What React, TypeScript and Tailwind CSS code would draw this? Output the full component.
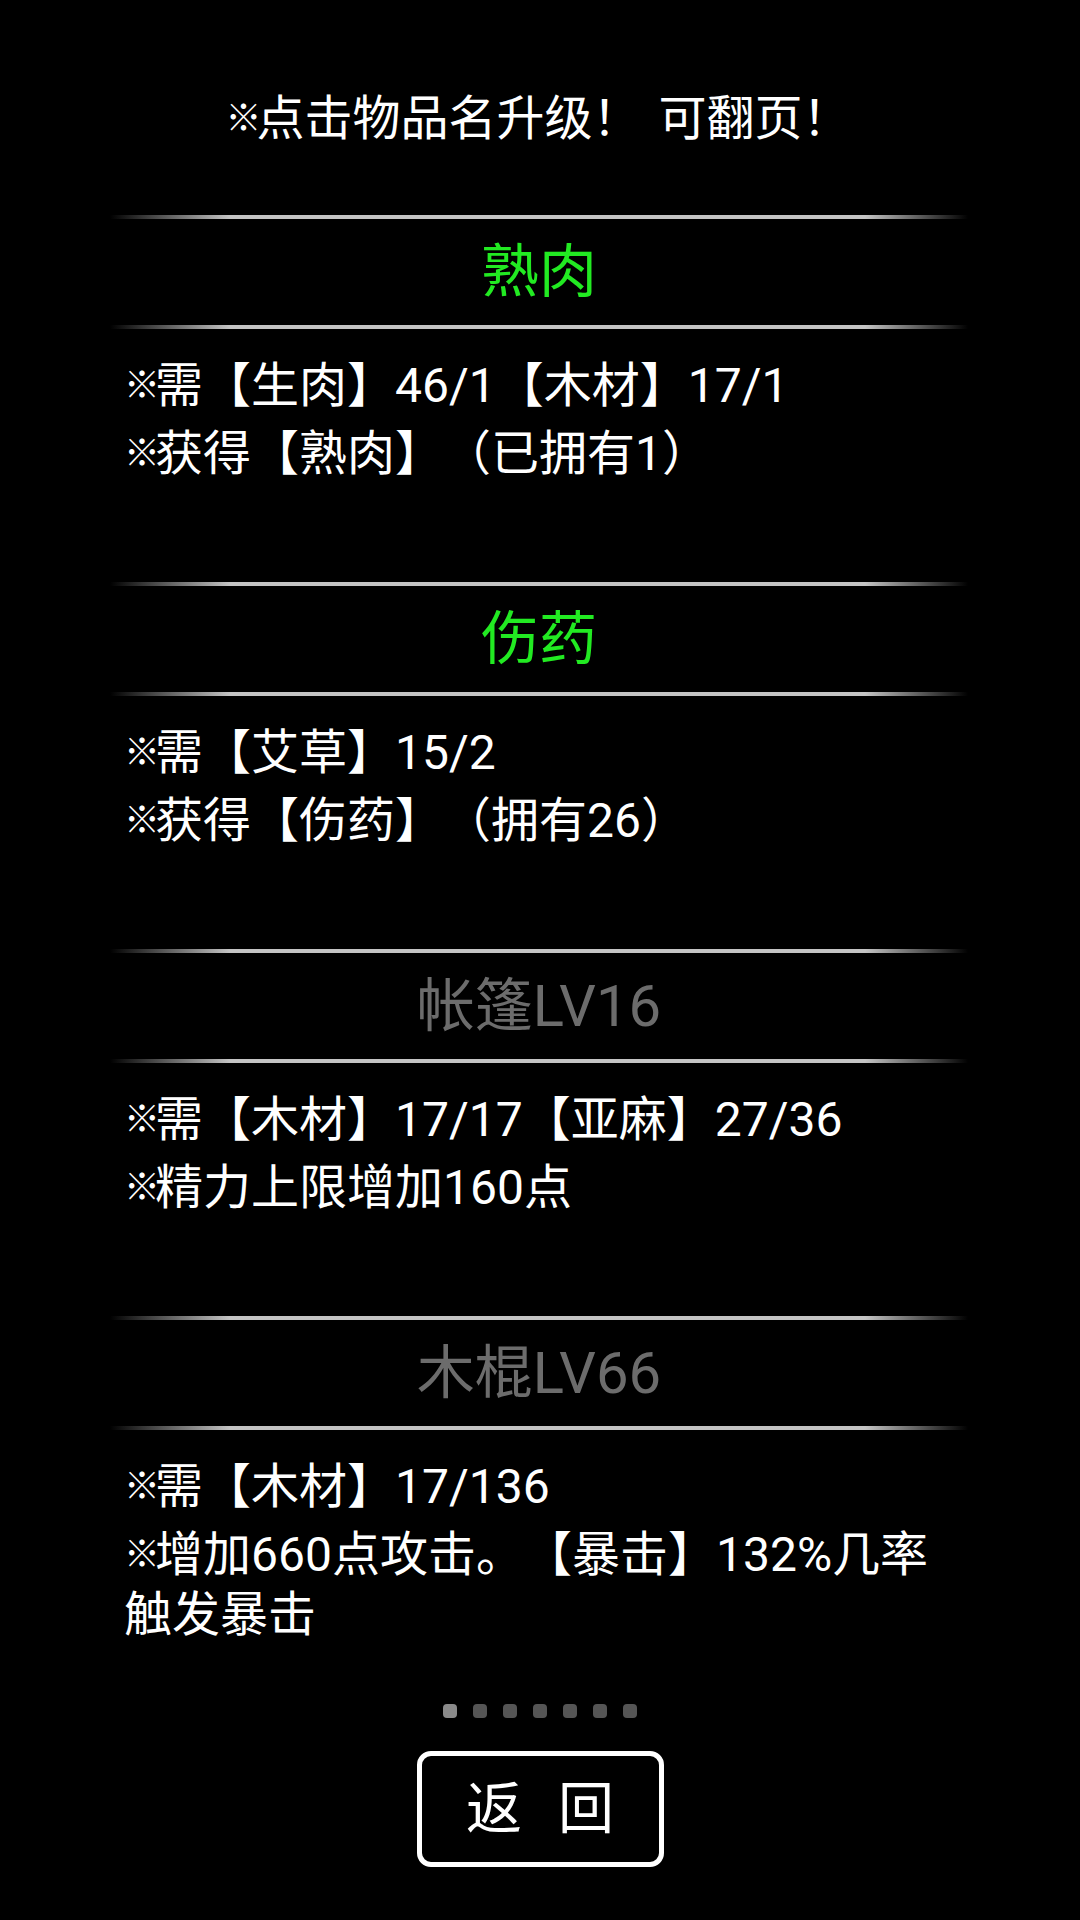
import React from 'react';

type Item = {
  name: string;
  active: boolean;
  lines: string[][];
};

const items: Item[] = [
  {
    name: '熟肉',
    active: true,
    lines: [['需【生肉】46/1【木材】17/1'], ['获得【熟肉】（已拥有1）']],
  },
  {
    name: '伤药',
    active: true,
    lines: [['需【艾草】15/2'], ['获得【伤药】（拥有26）']],
  },
  {
    name: '帐篷LV16',
    active: false,
    lines: [['需【木材】17/17【亚麻】27/36'], ['精力上限增加160点']],
  },
  {
    name: '木棍LV66',
    active: false,
    lines: [['需【木材】17/136'], ['增加660点攻击。【暴击】132%几率', '触发暴击']],
  },
];

// small reference mark, the game font draws it narrower than a full-width glyph
const Mark: React.FC = () => (
  <span className="align-[4px] text-[36px] font-bold tracking-[-5px]">※</span>
);

const Divider: React.FC = () => (
  <div className="h-[4px] w-full bg-[linear-gradient(to_right,transparent,#c4c4c4_14%,#c4c4c4_88%,transparent)]" />
);

const App: React.FC = () => {
  return (
    <div className="h-[1920px] w-[1080px] bg-black font-['Roboto','Noto_Sans_CJK_SC',sans-serif] text-white [text-spacing-trim:space-all]">
      <div className="ml-[110px] w-[858px]">
        <div className="h-[215px] pt-[91px]">
          <p className="pr-[2px] text-center text-[48px] leading-[56px] whitespace-nowrap">
            <Mark />
            点击物品名升级<span className="mr-[18px]">！</span>可翻页！
          </p>
        </div>

        {items.map((item) => (
          <div key={item.name} className="h-[367px]">
            <Divider />
            <div className="flex h-[106px] items-center justify-center">
              <span
                className={`text-[58px] leading-none ${item.active ? 'text-[#22ea22]' : 'text-[#6c6c6c]'}`}
              >
                {item.name}
              </span>
            </div>
            <Divider />
            <div className="flex flex-col gap-[8px] pl-[14px] pt-[27px]">
              {item.lines.map((para, i) => (
                <p key={i} className="text-[48px] leading-[60px] whitespace-nowrap">
                  <Mark />
                  {para.map((seg, j) => (
                    <React.Fragment key={j}>
                      {j > 0 && <br />}
                      {seg}
                    </React.Fragment>
                  ))}
                </p>
              ))}
            </div>
          </div>
        ))}
      </div>

      <div className="flex justify-center gap-[16px] pt-[21px]">
        {[0, 1, 2, 3, 4, 5, 6].map((i) => (
          <span
            key={i}
            className={`h-[14px] w-[14px] rounded-[4px] ${i === 0 ? 'bg-[#8a8a8a]' : 'bg-[#555555]'}`}
          />
        ))}
      </div>

      <div className="flex justify-center pt-[33px]">
        <button className="flex h-[116px] w-[247px] items-center justify-center gap-[36px] rounded-[14px] border-[5px] border-white bg-black text-[56px] leading-none text-white">
          <span>返</span>
          <span>回</span>
        </button>
      </div>
    </div>
  );
};

export default App;
